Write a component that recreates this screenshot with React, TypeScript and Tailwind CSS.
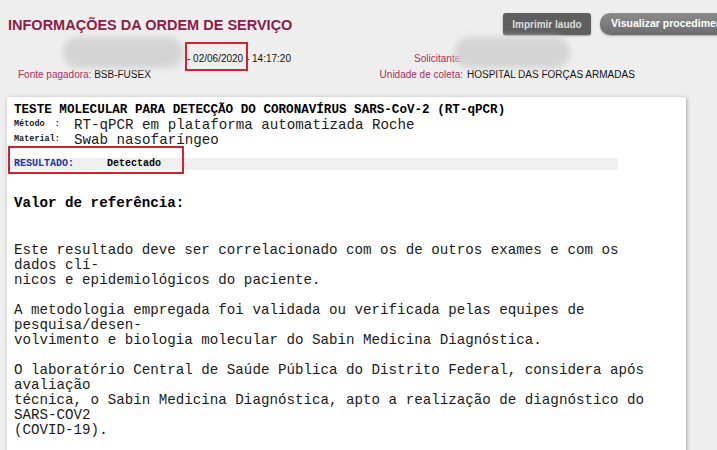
const bodyText = `Este resultado deve ser correlacionado com os de outros exames e com os
dados clí-
nicos e epidemiológicos do paciente.

A metodologia empregada foi validada ou verificada pelas equipes de
pesquisa/desen-
volvimento e biologia molecular do Sabin Medicina Diagnóstica.

O laboratório Central de Saúde Pública do Distrito Federal, considera após
avaliação
técnica, o Sabin Medicina Diagnóstica, apto a realização de diagnóstico do
SARS-COV2
(COVID-19).`;

const sans = 'font-["Liberation_Sans",Arial,sans-serif]';
const mono = 'font-["Liberation_Mono","Courier_New",monospace]';

export default function App() {
  return (
    <div className={`relative h-[450px] w-[717px] overflow-hidden bg-[#eeeeee] ${sans}`}>
      {/* header */}
      <div className="flex items-start pt-[13px]">
        <h1 className="ml-[8px] mt-[3.5px] text-[14.5px] font-bold leading-[17px] text-[#8e1c47]">
          INFORMAÇÕES DA ORDEM DE SERVIÇO
        </h1>
        <div className="ml-auto flex shrink-0 gap-[9px]">
          <button className="h-[22px] w-[88px] shrink-0 rounded-[3px] bg-[#5f5f5f] text-[10px] font-bold text-[#dddddd] shadow-[0_1px_2px_rgba(0,0,0,0.35)]">
            Imprimir laudo
          </button>
          <button className="-mr-[32px] h-[22px] shrink-0 whitespace-nowrap rounded-[10px] bg-gradient-to-b from-[#8c8c8c] to-[#6c6c6c] px-[11px] text-[10.5px] font-bold text-white shadow-[0_1px_2px_rgba(0,0,0,0.3)]">
            Visualizar procedimentos
          </button>
        </div>
      </div>

      {/* order info */}
      <div className="mt-[17.5px] flex text-[10px] leading-[12px] text-[#111]">
        <div className="w-[360px] whitespace-pre pl-[187px]">- 02/06/2020 - 14:17:20</div>
        <div className="flex">
          <span className="w-[103px] text-right text-[#a8305c]">Solicitante:</span>
        </div>
      </div>
      <div className="mt-[4px] flex text-[10px] leading-[12px] text-[#111]">
        <div className="w-[360px] pl-[18px]">
          <span className="text-[#a8305c]">Fonte pagadora:</span> BSB-FUSEX
        </div>
        <div className="flex">
          <span className="w-[103px] text-right text-[#a8305c]">Unidade de coleta:</span>
          <span className="ml-[4px]">HOSPITAL DAS FORÇAS ARMADAS</span>
        </div>
      </div>

      {/* report card */}
      <div className={`ml-[7px] mt-[16.5px] h-[400px] w-[679px] rounded-[3px] bg-white px-[7px] pt-[6px] text-[#1a1a1a] shadow-[1px_1px_4px_rgba(0,0,0,0.3)] ${mono}`}>
        <div className="whitespace-pre text-[12.6px] font-bold leading-[15px] text-black">
          TESTE MOLECULAR PARA DETECÇÃO DO CORONAVÍRUS SARS-CoV-2 (RT-qPCR)
        </div>
        <div className="flex h-[15px] items-start">
          <span className="w-[60px] whitespace-pre pt-[1px] text-[8.5px] font-bold leading-[10px]">Método  :</span>
          <span className="text-[14.2px] leading-[15px]">RT-qPCR em plataforma automatizada Roche</span>
        </div>
        <div className="flex h-[15px] items-start">
          <span className="w-[60px] whitespace-pre pt-[1px] text-[8.5px] font-bold leading-[10px]">Material:</span>
          <span className="text-[14.2px] leading-[15px]">Swab nasofaríngeo</span>
        </div>

        <div className="-ml-[4px] mt-[10px] flex h-[12px] w-[608px] items-center bg-[#efefef] pl-[4px] text-[10px] font-bold leading-[12px]">
          <span className="w-[93px] text-[#2331a6]">RESULTADO:</span>
          <span className="text-black">Detectado</span>
        </div>

        <div className="mt-[25.5px] text-[14.2px] font-bold leading-[15px] text-black">Valor de referência:</div>

        <div className="mt-[32px] whitespace-pre text-[14.2px] leading-[15px]">{bodyText}</div>
      </div>

      {/* blurred personal data */}
      <div className="absolute left-[63px] top-[37px] h-[31px] w-[120px] rounded-full bg-[#d4d4d4] blur-[3px]" />
      <div className="absolute left-[455px] top-[37px] h-[31px] w-[115px] rounded-full bg-[#d4d4d4] blur-[3px]" />

      {/* highlight boxes */}
      <div className="absolute left-[185px] top-[42px] h-[29px] w-[63px] border-2 border-[#d3222c]" />
      <div className="absolute left-[8px] top-[146px] h-[28px] w-[176px] border-2 border-[#d3222c]" />
    </div>
  );
}
